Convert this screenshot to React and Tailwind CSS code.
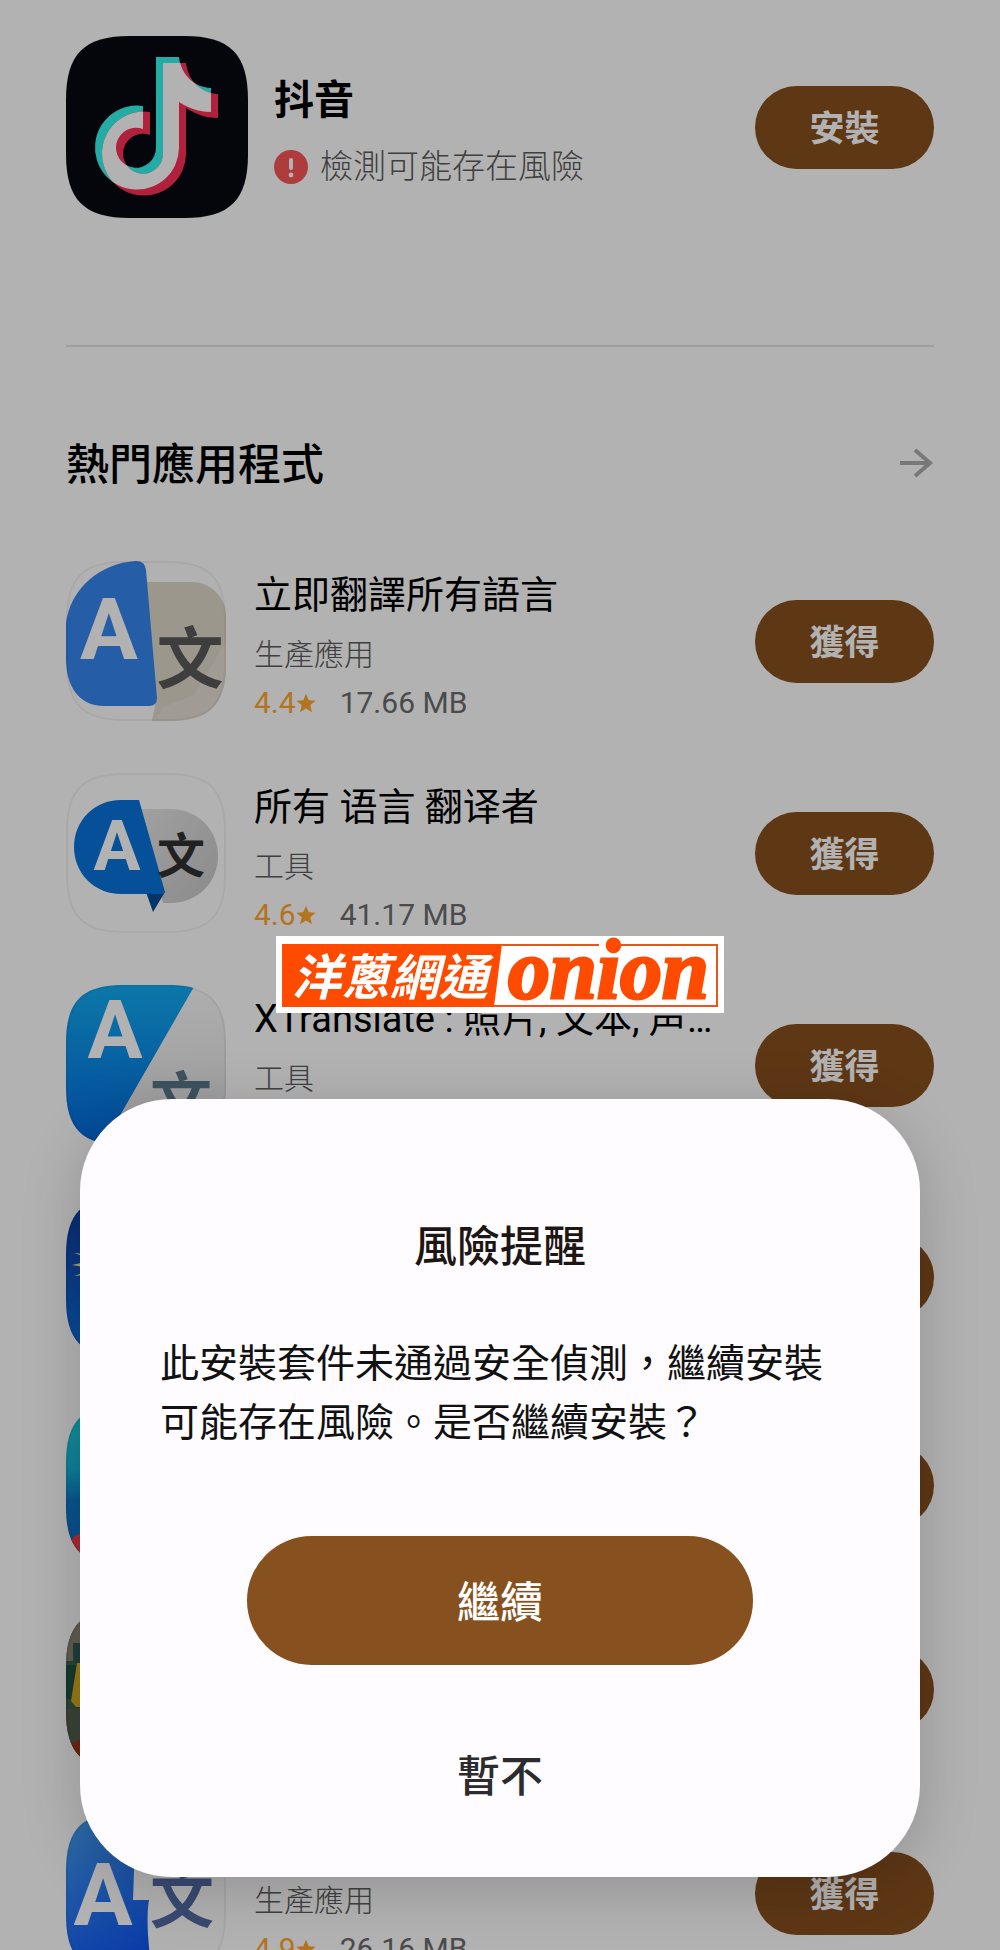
import React from "react";

/* ---------- App icons (160 x 160 artboard) ---------- */

const LATIN = "Roboto, sans-serif";
const HAN = "'Noto Sans CJK TC', sans-serif";

function Glyph({ x, y, size, fill, han }) {
  return (
    <text
      x={x}
      y={y}
      fontSize={size}
      fontWeight="700"
      fill={fill}
      textAnchor="middle"
      fontFamily={han ? HAN : LATIN}
    >
      {han ? "文" : "A"}
    </text>
  );
}

function IconTile({ id, children }) {
  return (
    <svg viewBox="0 0 160 160" className="size-40 shrink-0" aria-hidden="true">
      <defs>
        <clipPath id={id}>
          <path d="M0 58 C0 16 16 0 58 0 H102 C144 0 160 16 160 58 V102 C160 144 144 160 102 160 H58 C16 160 0 144 0 102 Z" />
        </clipPath>
      </defs>
      <g clipPath={`url(#${id})`}>{children}</g>
      <path
        d="M1 58 C1 17 17 1 58 1 H102 C143 1 159 17 159 58 V102 C159 143 143 159 102 159 H58 C17 159 1 143 1 102 Z"
        fill="none"
        stroke="#000"
        strokeOpacity="0.05"
        strokeWidth="2"
      />
    </svg>
  );
}

function TranslateNowIcon() {
  return (
    <IconTile id="tile-1">
      <rect width="160" height="160" fill="#fefefe" />
      <path d="M80 21 H126 C146 21 160 38 160 54 V160 H86 L90 140 Z" fill="#dfd9ca" />
      <path d="M98 146 L128 134 L160 80 V160 H86 Z" fill="#e6e0d4" />
      <path d="M0 62 C4 28 34 2 70 0 Q79 0 80 9 L91 137 Q91 145 83 145 H38 C12 145 0 124 0 98 Z" fill="#3786ef" />
      <Glyph x={43} y={98} size={86} fill="#fff" />
      <Glyph x={124} y={122} size={67} fill="#5a5a5a" han />
    </IconTile>
  );
}

function AllLanguageIcon() {
  return (
    <IconTile id="tile-2">
      <rect width="160" height="160" fill="#fff" />
      <defs>
        <linearGradient id="grey-2" x1="0" y1="0" x2="1" y2="1">
          <stop offset="0" stopColor="#e6e6e6" />
          <stop offset="1" stopColor="#c6c6c6" />
        </linearGradient>
      </defs>
      <path d="M74 36 H104 C132 36 152 57 152 83 S132 130 104 130 H97 Z" fill="url(#grey-2)" />
      <path d="M80 119 H99 L87 139 Z" fill="#064d98" />
      <path d="M55 27 H73 L99 119 L97 121 H55 C28 121 8 100 8 74 S28 27 55 27 Z" fill="#0a72dc" />
      <Glyph x={51} y={97} size={70} fill="#fff" />
      <Glyph x={115} y={100} size={48} fill="#303030" han />
    </IconTile>
  );
}

function XTranslateIcon() {
  return (
    <IconTile id="tile-3">
      <defs>
        <linearGradient id="blue-3" x1="0" y1="0" x2="0" y2="1">
          <stop offset="0" stopColor="#12acf2" />
          <stop offset="1" stopColor="#0468dc" />
        </linearGradient>
        <linearGradient id="grey-3" x1="0" y1="0" x2="0" y2="1">
          <stop offset="0" stopColor="#fafafa" />
          <stop offset="1" stopColor="#dcdcdc" />
        </linearGradient>
      </defs>
      <rect width="160" height="160" fill="url(#grey-3)" />
      <path d="M0 0 H129 L37 160 H0 Z" fill="url(#blue-3)" />
      <Glyph x={49} y={73} size={82} fill="#fff" />
      <Glyph x={115} y={139} size={62} fill="#587888" han />
    </IconTile>
  );
}

function SunburstIcon() {
  return (
    <IconTile id="tile-4">
      <defs>
        <linearGradient id="blue-4" x1="0" y1="0" x2="0" y2="1">
          <stop offset="0" stopColor="#0c3c9c" />
          <stop offset="1" stopColor="#0f6fe0" />
        </linearGradient>
      </defs>
      <rect width="160" height="160" fill="url(#blue-4)" />
      <path
        d="M6 68 L28 63 L8 56 L30 58 L14 45 L34 54 L26 36 L40 52 L54 36 L46 54 L66 45 L50 58 L72 56 L52 63 L74 68 L52 72 L72 79 L50 77 L66 90 L46 82 L40 100 L34 82 L14 90 L30 77 L8 79 L28 72 Z"
        fill="#e8e2a0"
      />
    </IconTile>
  );
}

function OceanIcon() {
  return (
    <IconTile id="tile-5">
      <defs>
        <linearGradient id="sea-5" x1="0" y1="0" x2="0" y2="1">
          <stop offset="0" stopColor="#1fd0dc" />
          <stop offset="0.4" stopColor="#14b4d8" />
          <stop offset="0.6" stopColor="#0c78c8" />
          <stop offset="1" stopColor="#1268c8" />
        </linearGradient>
      </defs>
      <rect width="160" height="160" fill="url(#sea-5)" />
      <circle cx="16" cy="142" r="13" fill="#f03c48" />
    </IconTile>
  );
}

function StreetIcon() {
  return (
    <IconTile id="tile-6">
      <rect width="160" height="160" fill="#3e604c" />
      <rect width="160" height="52" fill="#8a8470" />
      <rect x="7" y="34" width="10" height="20" fill="#2f5a52" />
      <rect y="56" width="160" height="34" fill="#205244" />
      <rect y="100" width="160" height="60" fill="#545f50" />
      <path d="M11 54 H22 V98 H10 L5 92 Z" fill="#d8ac20" />
      <path d="M6 134 L16 130 V160 H0 Z" fill="#a03418" />
    </IconTile>
  );
}

function SpeechIcon() {
  return (
    <IconTile id="tile-7">
      <defs>
        <linearGradient id="blue-7" x1="0" y1="0" x2="0.3" y2="1">
          <stop offset="0" stopColor="#46a0f0" />
          <stop offset="1" stopColor="#1258f0" />
        </linearGradient>
      </defs>
      <rect width="160" height="160" fill="#fdfdfd" />
      <path d="M0 0 H70 L67 87 H83 C80 104 82 130 86 160 H0 Z" fill="url(#blue-7)" />
      <Glyph x={37} y={112} size={88} fill="#fff" />
      <Glyph x={116} y={109} size={64} fill="#5269a2" han />
    </IconTile>
  );
}

function DouyinIcon() {
  const note =
    "M90 21 H113 C115 38 127 51 145 52 V76 C133 76 122 72 113 66 V112 A42 42 0 1 1 77 70 V93 A20 20 0 1 0 90 112 Z";
  return (
    <svg viewBox="0 0 182 182" className="size-[182px] shrink-0" aria-hidden="true">
      <defs>
        <clipPath id="note-front">
          <path d={note} />
        </clipPath>
      </defs>
      <path
        d="M0 64 C0 18 18 0 64 0 H118 C164 0 182 18 182 64 V118 C182 164 164 182 118 182 H64 C18 182 0 164 0 118 Z"
        fill="#080a12"
      />
      <path d={note} fill="#33f6ee" />
      <path d={note} fill="#fe2f57" transform="translate(7 6)" />
      <g clipPath="url(#note-front)">
        <path d={note} fill="#fff" transform="translate(7 6)" />
      </g>
    </svg>
  );
}

/* ---------- Small symbols ---------- */

function AlertIcon() {
  return (
    <svg viewBox="0 0 34 34" className="size-[34px] shrink-0" aria-hidden="true">
      <circle cx="17" cy="17" r="17" fill="#fb5656" />
      <rect x="15" y="8" width="4" height="12" rx="2" fill="#fff" />
      <circle cx="17" cy="25" r="2.4" fill="#fff" />
    </svg>
  );
}

function StarIcon() {
  return (
    <svg viewBox="0 0 24 24" className="size-5" fill="currentColor" aria-hidden="true">
      <path d="M12 1 L15.2 8.8 L23.5 9.4 L17.1 14.8 L19.2 23 L12 18.5 L4.8 23 L6.9 14.8 L0.5 9.4 L8.8 8.8 Z" />
    </svg>
  );
}

function ArrowIcon() {
  return (
    <svg viewBox="0 0 34 34" className="size-[34px]" fill="none" stroke="#adadad" strokeWidth="4" aria-hidden="true">
      <path d="M0 17 H28 M15 4 L30 17 L15 30" />
    </svg>
  );
}

/* ---------- Store list ---------- */

const APPS = [
  { name: "立即翻譯所有語言", kind: "生產應用", score: "4.4", size: "17.66 MB", Icon: TranslateNowIcon },
  { name: "所有 语言 翻译者", kind: "工具", score: "4.6", size: "41.17 MB", Icon: AllLanguageIcon },
  { name: "XTranslate : 照片, 文本, 声音翻译", kind: "工具", Icon: XTranslateIcon },
  { Icon: SunburstIcon },
  { Icon: OceanIcon, compact: true },
  { Icon: StreetIcon, compact: true },
  { kind: "生產應用", score: "4.9", size: "26.16 MB", Icon: SpeechIcon, compact: true },
];

function PillButton({ children }) {
  return (
    <button
      type="button"
      className="h-[83px] w-[179px] shrink-0 rounded-full bg-[#87501f] pt-1.5 text-[35px] font-bold text-white"
    >
      {children}
    </button>
  );
}

function AppRow({ app }) {
  const { name, kind, score, size, Icon, compact } = app;
  return (
    <li className={compact ? "flex items-center py-[22px]" : "flex items-center py-[24px]"}>
      <Icon />
      <div className="ml-7 mr-8 min-w-0 flex-1 pt-1">
        <h3
          className={
            compact
              ? "h-[52px] truncate text-[38px] leading-[52px]"
              : "h-16 truncate font-['Roboto','Noto_Sans_CJK_SC',sans-serif] text-[38px] leading-[64px]"
          }
        >
          {name}
        </h3>
        <p className="h-14 text-[30px] leading-[56px] font-light text-[#5c5c5c]">{kind}</p>
        <p className="flex h-10 items-center text-[30px] leading-[40px] text-[#6c6c6c]">
          {score && (
            <>
              <span className="mr-6 flex items-center text-[#ffa62c]">
                {score}
                <StarIcon />
              </span>
              {size}
            </>
          )}
        </p>
      </div>
      <PillButton>獲得</PillButton>
    </li>
  );
}

function StorePage() {
  return (
    <main className="px-[66px] pt-9">
      <section className="flex items-center">
        <DouyinIcon />
        <div className="ml-[26px] min-w-0 flex-1 pt-4">
          <h1 className="text-[40px] leading-[64px] font-bold">抖音</h1>
          <p className="flex items-center gap-3 text-[33px] leading-[68px] font-light text-[#5c5c5c]">
            <AlertIcon />
            檢測可能存在風險
          </p>
        </div>
        <PillButton>安裝</PillButton>
      </section>

      <hr className="mt-[127px] border-t-2 border-[#e2e2e2]" />

      <section className="mt-[86px]">
        <div className="flex items-center justify-between">
          <h2 className="text-[43px] leading-[64px] font-medium">熱門應用程式</h2>
          <button type="button" aria-label="查看更多" className="pb-1">
            <ArrowIcon />
          </button>
        </div>
        <ul className="mt-[38px]">
          {APPS.map((app, i) => (
            <AppRow key={i} app={app} />
          ))}
        </ul>
      </section>
    </main>
  );
}

/* ---------- Overlays ---------- */

function OnionBadge() {
  return (
    <div className="absolute top-[936px] left-1/2 h-[77px] w-[448px] -translate-x-1/2 bg-white">
      <svg viewBox="0 0 448 77" className="absolute inset-0 size-full" aria-hidden="true">
        <path d="M6 8 H226 L218 71 H6 Z" fill="#ff4b00" />
        <path d="M226 9 H323 M345 9 H441 V70 H218" fill="none" stroke="#e8561c" strokeWidth="2" />
      </svg>
      <div className="relative flex h-full items-center italic">
        <span className="w-[232px] pt-2 pl-4 text-[49px] leading-[49px] font-bold text-white">洋蔥網通</span>
        <span className="pb-2.5 font-['Liberation_Serif',serif] text-[84px] leading-[64px] font-bold text-[#ff4b00] [-webkit-text-stroke:3px_#ff4b00]">
          onion
        </span>
      </div>
    </div>
  );
}

function RiskDialog() {
  return (
    <div
      role="dialog"
      aria-modal="true"
      aria-labelledby="risk-title"
      className="flex w-full flex-col rounded-[92px] bg-[#fefcff] px-20 pt-[116px] pb-[58px] text-center shadow-[0_12px_60px_rgba(0,0,0,0.18)]"
    >
      <h2 id="risk-title" className="text-[43px] leading-[64px] font-medium text-[#1e1612]">
        風險提醒
      </h2>
      <p className="mt-14 text-left text-[39px] leading-[59px] text-[#111]">
        此安裝套件未通過安全偵測，繼續安裝可能存在風險。是否繼續安裝？
      </p>
      <button
        type="button"
        className="mx-auto mt-[83px] h-[129px] w-[506px] rounded-full bg-[#87501f] pt-1.5 text-[43px] font-medium text-white"
      >
        繼續
      </button>
      <button
        type="button"
        className="mx-auto mt-16 h-[90px] w-[506px] pt-1.5 text-[43px] font-medium text-[#2c2c2e]"
      >
        暫不
      </button>
    </div>
  );
}

export default function App() {
  return (
    <div
      lang="zh-Hant"
      className="relative h-screen overflow-hidden bg-white font-['Roboto','Noto_Sans_CJK_TC',sans-serif] text-black"
    >
      <StorePage />
      <div className="absolute inset-0 flex items-end bg-black/30 px-20 pb-[73px]">
        <RiskDialog />
      </div>
      <OnionBadge />
    </div>
  );
}
